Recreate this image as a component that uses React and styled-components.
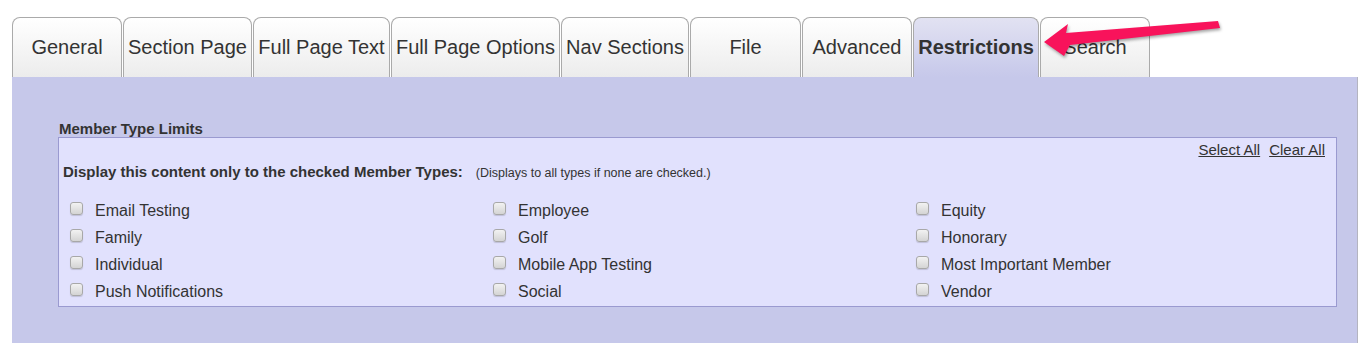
import React from "react";
import styled, { createGlobalStyle } from "styled-components";

const GlobalStyle = createGlobalStyle`
    body {
        margin: 0;
        background: #fff;
        font-family: "Liberation Sans", Arial, sans-serif;
        color: #333;
    }
`;

const Page = styled.div`
    position: relative;
    height: 343px;
    overflow: hidden;
    padding: 17px 8px 0 12px;
`;

const TabBar = styled.div`
    display: flex;
    gap: 1px;
    height: 60px;
`;

const Tab = styled.div`
    box-sizing: border-box;
    flex: none;
    width: ${(p) => p.width}px;
    height: 60px;
    display: flex;
    align-items: center;
    justify-content: center;
    white-space: nowrap;
    font-size: 20px;
    font-weight: ${(p) => (p.active ? "bold" : "normal")};
    color: #333;
    border: 1px solid #aaa;
    border-bottom: none;
    border-radius: 8px 8px 0 0;
    background: ${(p) =>
        p.active
            ? "linear-gradient(#e2e2f2, #c6c8ea)"
            : "linear-gradient(#fff, #ececec)"};
`;

const Panel = styled.div`
    box-sizing: border-box;
    height: 300px;
    background: #c6c8ea;
    border-right: 1px solid #b4b4c0;
    padding: 43px 20px 0 46px;
`;

const Legend = styled.div`
    font-size: 15px;
    font-weight: bold;
    line-height: 17px;
    padding-left: 1px;
`;

const Box = styled.div`
    background: #e1e1fd;
    border: 1px solid #9a9ad0;
    padding: 4px 11px 1px 4px;
    height: 170px;
    box-sizing: border-box;
`;

const LinkRow = styled.div`
    display: flex;
    justify-content: flex-end;
    gap: 9px;
    font-size: 15px;
    line-height: 16px;
`;

const Link = styled.a`
    color: #333;
    text-decoration: underline;
    cursor: pointer;
`;

const Intro = styled.div`
    margin-top: 5px;
    font-size: 15px;
    line-height: 18px;
    font-weight: bold;
    display: flex;
    align-items: baseline;
    gap: 13px;
`;

const Note = styled.span`
    font-size: 12.5px;
    font-weight: normal;
`;

const Grid = styled.div`
    margin-top: 15px;
    display: grid;
    grid-template-columns: repeat(3, 423px);
    grid-auto-rows: 27px;
    padding-left: 7px;
`;

const Item = styled.label`
    display: flex;
    align-items: center;
    font-size: 16px;
    color: #333;
`;

const Check = styled.span`
    box-sizing: border-box;
    width: 13px;
    height: 13px;
    margin: -5px 12px 0 0;
    border: 1px solid #a8a8a8;
    border-radius: 3px;
    background: linear-gradient(#f2f2f2, #d4d4d4);
    box-shadow: 0 1px 1px rgba(0, 0, 0, 0.15);
`;

const Arrow = styled.svg`
    position: absolute;
    left: 1030px;
    top: 10px;
    filter: drop-shadow(1px 2px 1.5px rgba(0, 0, 0, 0.35));
`;

const tabs = [
    ["General", 110],
    ["Section Page", 129],
    ["Full Page Text", 137],
    ["Full Page Options", 169],
    ["Nav Sections", 128],
    ["File", 111],
    ["Advanced", 110],
    ["Restrictions", 126],
    ["Search", 110],
];

const types = [
    "Email Testing", "Employee", "Equity",
    "Family", "Golf", "Honorary",
    "Individual", "Mobile App Testing", "Most Important Member",
    "Push Notifications", "Social", "Vendor",
];

export default function App() {
    return (
        <Page>
            <GlobalStyle />
            <TabBar>
                {tabs.map(([name, w]) => (
                    <Tab key={name} width={w} active={name === "Restrictions"}>
                        {name}
                    </Tab>
                ))}
            </TabBar>
            <Panel>
                <Legend>Member Type Limits</Legend>
                <Box>
                    <LinkRow>
                        <Link>Select All</Link>
                        <Link>Clear All</Link>
                    </LinkRow>
                    <Intro>
                        Display this content only to the checked Member Types:
                        <Note>(Displays to all types if none are checked.)</Note>
                    </Intro>
                    <Grid>
                        {types.map((t) => (
                            <Item key={t}>
                                <Check />
                                {t}
                            </Item>
                        ))}
                    </Grid>
                </Box>
            </Panel>
            <Arrow width="200" height="60" viewBox="0 0 200 60">
                <polygon
                    fill="#f8135b"
                    points="14,32 38,14 36,23 188,11 190,18 40,35 34,46"
                />
            </Arrow>
        </Page>
    );
}
